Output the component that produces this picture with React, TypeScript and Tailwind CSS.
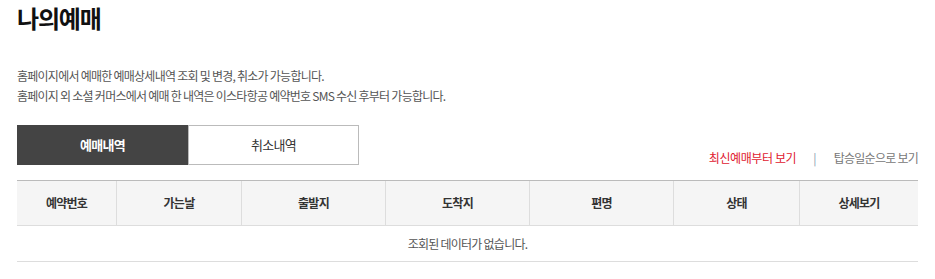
import React from "react";

const columns = [
  { label: "예약번호", w: "w-[99px]" },
  { label: "가는날", w: "w-[125px]" },
  { label: "출발지", w: "w-[144px]" },
  { label: "도착지", w: "w-[144px]" },
  { label: "편명", w: "w-[144px]" },
  { label: "상태", w: "w-[126px]" },
  { label: "상세보기", w: "flex-1" },
];

export default function App() {
  return (
    <div
      className="w-[935px] h-[279px] bg-white px-[17px] pt-[3px] text-[#333]"
      style={{ fontFamily: '"Noto Sans CJK KR", "Noto Sans", sans-serif' }}
    >
      {/* Title */}
      <h1 className="text-[24px] font-bold leading-[30px] tracking-[-1.2px] text-[#111]">나의예매</h1>

      {/* Notice */}
      <div className="mt-[33px] text-[12px] leading-[20px] tracking-[-0.75px] text-[#555]">
        <p>홈페이지에서 예매한 예매상세내역 조회 및 변경, 취소가 가능합니다.</p>
        <p>홈페이지 외 소셜 커머스에서 예매 한 내역은 이스타항공 예약번호 SMS 수신 후부터 가능합니다.</p>
      </div>

      {/* Tabs + sort */}
      <div className="mt-[19px] flex items-end justify-between">
        <div className="flex">
          <button className="w-[171px] h-[40px] bg-[#444] text-white text-[13px] font-bold tracking-[-0.75px]">
            예매내역
          </button>
          <button className="w-[171px] h-[40px] bg-white border border-[#bbb] text-[#333] text-[13px] tracking-[-0.75px]">
            취소내역
          </button>
        </div>
        <div className="flex items-center text-[12px] tracking-[-0.75px] mb-[-2px]">
          <span className="text-[#e0202f] tracking-[-0.4px]">최신예매부터 보기</span>
          <span className="ml-[17px] mr-[18px] text-[#8a9bb0]">|</span>
          <span className="text-[#777]">탑승일순으로 보기</span>
        </div>
      </div>

      {/* Table */}
      <div className="mt-[15px] border-t border-[#bbb]">
        <div className="flex h-[45px] bg-[#f5f5f5] border-b border-[#ddd]">
          {columns.map((c, i) => (
            <div
              key={c.label}
              className={`${c.w} flex items-center justify-center text-[12px] font-bold tracking-[-0.75px] text-[#333] ${
                i > 0 ? "border-l border-[#ddd]" : ""
              }`}
            >
              {c.label}
            </div>
          ))}
        </div>
        <div className="h-[36px] flex items-center justify-center border-b border-[#ddd] text-[12px] tracking-[-0.75px] text-[#555]">
          조회된 데이터가 없습니다.
        </div>
      </div>
    </div>
  );
}
